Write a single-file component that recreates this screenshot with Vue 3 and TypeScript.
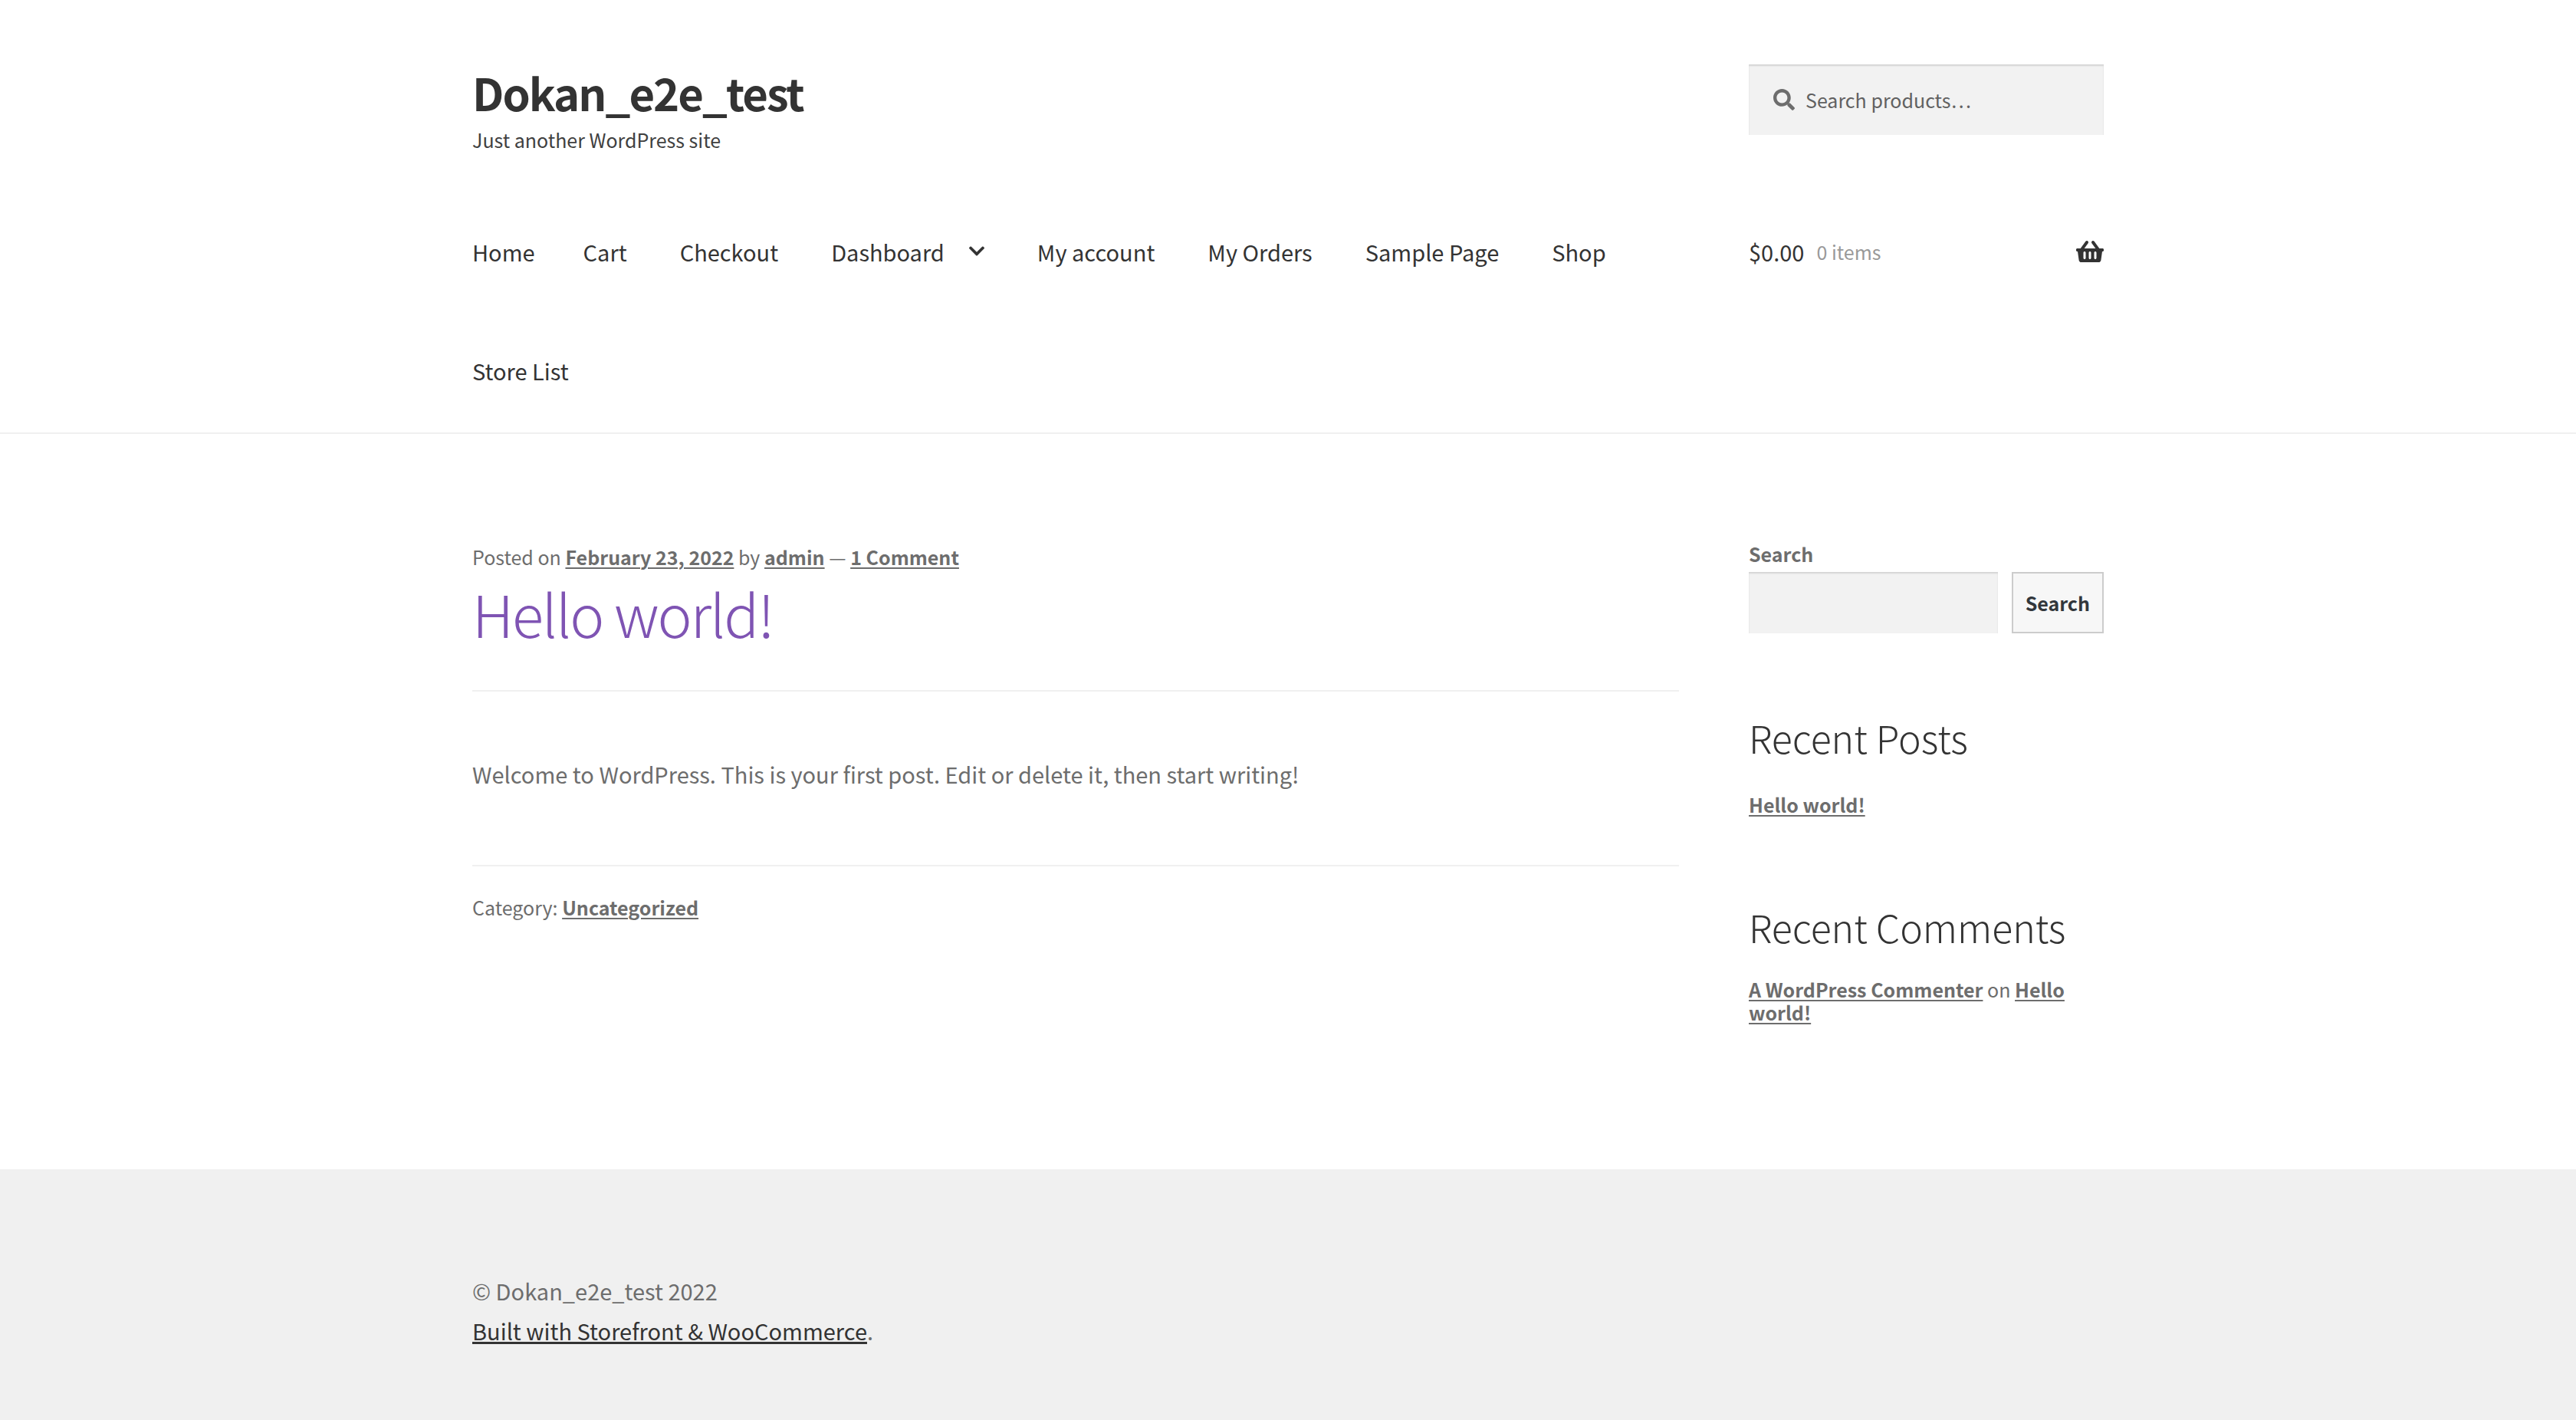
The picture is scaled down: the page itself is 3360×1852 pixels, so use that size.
<script setup lang="ts">
import { ref } from 'vue'

interface NavItem {
  label: string
  hasChildren?: boolean
}

const navItems: NavItem[] = [
  { label: 'Home' },
  { label: 'Cart' },
  { label: 'Checkout' },
  { label: 'Dashboard', hasChildren: true },
  { label: 'My account' },
  { label: 'My Orders' },
  { label: 'Sample Page' },
  { label: 'Shop' },
  { label: 'Store List' },
]

const productQuery = ref('')
const siteQuery = ref('')
</script>

<template>
  <div class="page">
    <header class="site-header">
      <div class="container">
        <div class="columns">
          <div class="branding">
            <a class="site-title" href="#">Dokan_e2e_test</a>
            <p class="tagline">Just another WordPress site</p>
          </div>
          <form class="product-search" role="search" @submit.prevent>
            <svg class="search-icon" viewBox="0 0 512 512" aria-hidden="true">
              <path d="M505 442.7L405.3 343c-4.5-4.5-10.6-7-17-7H372c27.6-35.3 44-79.7 44-128C416 93.1 322.9 0 208 0S0 93.1 0 208s93.1 208 208 208c48.3 0 92.7-16.4 128-44v16.3c0 6.4 2.5 12.5 7 17l99.7 99.7c9.4 9.4 24.6 9.4 33.9 0l28.3-28.3c9.4-9.4 9.4-24.6.1-34zM208 336c-70.7 0-128-57.2-128-128 0-70.7 57.2-128 128-128 70.7 0 128 57.2 128 128 0 70.7-57.2 128-128 128z" />
            </svg>
            <input v-model="productQuery" type="search" aria-label="Search products" placeholder="Search products…" />
          </form>
        </div>
        <div class="columns">
          <nav class="main-nav">
            <ul>
              <li v-for="item in navItems" :key="item.label">
                <a href="#">{{ item.label }}
                  <svg v-if="item.hasChildren" class="chevron" viewBox="5 123 438 266" aria-hidden="true">
                    <path d="M207.029 381.476L12.686 187.132c-9.373-9.373-9.373-24.569 0-33.941l22.667-22.667c9.357-9.357 24.522-9.375 33.901-.04L224 284.505l154.745-154.021c9.379-9.335 24.544-9.317 33.901.04l22.667 22.667c9.373 9.373 9.373 24.569 0 33.941L240.971 381.476c-9.373 9.372-24.569 9.372-33.942 0z" />
                  </svg>
                </a>
              </li>
            </ul>
          </nav>
          <a class="cart" href="#">
            <span>$0.00</span>
            <span class="count">0 items</span>
            <svg class="basket" viewBox="0 0 576 512" aria-hidden="true">
              <path d="M576 216v16c0 13.255-10.745 24-24 24h-8l-26.113 182.788C514.509 462.435 494.257 480 470.37 480H105.63c-23.887 0-44.139-17.565-47.518-41.212L32 256h-8c-13.255 0-24-10.745-24-24v-16c0-13.255 10.745-24 24-24h67.341l106.78-146.821c10.395-14.292 30.407-17.453 44.701-7.058 14.293 10.395 17.453 30.408 7.058 44.701L170.477 192h235.046L326.12 82.821c-10.395-14.292-7.234-34.306 7.059-44.701 14.291-10.395 34.306-7.235 44.701 7.058L484.659 192H552c13.255 0 24 10.745 24 24zM312 392V280c0-13.255-10.745-24-24-24s-24 10.745-24 24v112c0 13.255 10.745 24 24 24s24-10.745 24-24zm112 0V280c0-13.255-10.745-24-24-24s-24 10.745-24 24v112c0 13.255 10.745 24 24 24s24-10.745 24-24zm-224 0V280c0-13.255-10.745-24-24-24s-24 10.745-24 24v112c0 13.255 10.745 24 24 24s24-10.745 24-24z" />
            </svg>
          </a>
        </div>
      </div>
    </header>

    <div class="container columns content">
      <main>
        <article>
          <header class="entry-header">
            <p class="meta">
              Posted on <a href="#">February 23, 2022</a> by <a href="#">admin</a> — <a href="#">1 Comment</a>
            </p>
            <h1><a href="#">Hello world!</a></h1>
          </header>
          <p class="entry-text">Welcome to WordPress. This is your first post. Edit or delete it, then start writing!</p>
          <footer class="entry-footer meta">Category: <a href="#">Uncategorized</a></footer>
        </article>
      </main>

      <aside>
        <form class="widget-search" role="search" @submit.prevent>
          <label for="site-search">Search</label>
          <div class="search-row">
            <input id="site-search" v-model="siteQuery" type="search" />
            <button type="submit">Search</button>
          </div>
        </form>
        <section class="recent-posts">
          <h2>Recent Posts</h2>
          <ul>
            <li><a href="#">Hello world!</a></li>
          </ul>
        </section>
        <section class="recent-comments">
          <h2>Recent Comments</h2>
          <ol>
            <li><a href="#">A WordPress Commenter</a> on <a href="#">Hello world!</a></li>
          </ol>
        </section>
      </aside>
    </div>

    <footer class="site-footer">
      <div class="container">
        <p>© Dokan_e2e_test 2022</p>
        <p><a href="#">Built with Storefront &amp; WooCommerce</a>.</p>
      </div>
    </footer>
  </div>
</template>

<style>
body {
  margin: 0;
  background: #fff;
}
</style>

<style scoped>
.page {
  display: flex;
  flex-direction: column;
  min-height: 100vh;
  font-family: "Noto Sans CJK SC", "Noto Sans", sans-serif;
  font-size: 29px;
  line-height: 52px;
  color: #6d6d6d;
}

* {
  box-sizing: border-box;
}

p,
h1,
h2,
ul,
ol {
  margin: 0;
  padding: 0;
}

ul,
ol {
  list-style: none;
}

svg {
  fill: currentColor;
}

.container {
  width: 100%;
  max-width: 2128px;
  margin: 0 auto;
}

.columns {
  display: grid;
  grid-template-columns: minmax(0, 1fr) 463px;
  column-gap: 91px;
  align-items: start;
}

/* Header */
.site-header {
  padding: 84px 0 4px;
  border-bottom: 2px solid #f0f0f0;
}

.branding {
  padding: 6px 0 52px;
  color: #404040;
}

.site-title {
  display: block;
  font-size: 58px;
  line-height: 60px;
  font-weight: 700;
  letter-spacing: -2px;
  color: #333;
  text-decoration: none;
}

.tagline {
  margin-top: 16px;
  font-size: 25px;
  line-height: 32px;
}

input {
  min-width: 0;
  border: 0;
  border-radius: 0;
  outline: 0;
  background: #f2f2f2;
  box-shadow: inset 0 2px 2px rgba(0, 0, 0, 0.125);
  font: inherit;
  font-size: 25px;
  color: #43454b;
  appearance: none;
}

.product-search {
  display: grid;
  align-items: center;
}

.product-search > * {
  grid-area: 1 / 1;
}

.product-search input {
  width: 100%;
  height: 92px;
  padding: 0 32px 0 74px;
}

.product-search input::placeholder {
  color: #616161;
  opacity: 1;
}

.search-icon {
  z-index: 1;
  width: 28px;
  height: 28px;
  margin-left: 32px;
}

.main-nav ul {
  display: flex;
  flex-wrap: wrap;
  column-gap: 69px;
}

.main-nav li:first-child {
  margin-right: -6px;
}

.main-nav a {
  display: flex;
  align-items: center;
  gap: 32px;
  height: 155px;
  color: #333;
  text-decoration: none;
}

.chevron {
  width: 20px;
  height: 13px;
}

.cart {
  display: flex;
  align-items: center;
  gap: 16px;
  height: 155px;
  color: #333;
  text-decoration: none;
}

.count {
  font-size: 25px;
  color: #999;
}

.basket {
  width: 36px;
  height: 32px;
  margin-left: auto;
}

/* Content */
.content {
  padding: 136px 0 190px;
}

main {
  padding-top: 4px;
}

.meta {
  font-size: 25px;
  line-height: 40px;
}

.meta a,
aside a {
  font-weight: 700;
  color: #6d6d6d;
  text-decoration: underline;
  text-decoration-thickness: 2px;
  text-underline-offset: 3px;
}

.entry-header {
  padding-bottom: 53px;
  border-bottom: 2px solid #f0f0f0;
}

h1 {
  margin-top: 5px;
  font-size: 76px;
  line-height: 96px;
  font-weight: 300;
  letter-spacing: -2px;
}

h1 a {
  color: #7f54b3;
  text-decoration: none;
}

.entry-text {
  padding: 81px 0 93px;
}

.entry-footer {
  padding-top: 33px;
  border-top: 2px solid #f0f0f0;
}

/* Sidebar */
aside {
  font-size: 25px;
  line-height: 30px;
}

.widget-search label {
  display: block;
  margin-bottom: 4px;
  line-height: 40px;
  font-weight: 700;
}

.search-row {
  display: flex;
  gap: 18px;
}

.search-row input {
  flex: 1;
  height: 80px;
  padding: 0 16px;
}

.search-row button {
  height: 80px;
  padding: 0 16px;
  border: 2px solid #ccc;
  border-radius: 0;
  background: #f7f7f7;
  font: inherit;
  font-weight: 700;
  color: #32373c;
}

h2 {
  font-size: 50px;
  line-height: 60px;
  font-weight: 300;
  color: #333;
}

.recent-posts {
  margin-top: 105px;
}

.recent-posts ul {
  margin-top: 43px;
}

.recent-comments {
  margin-top: 114px;
}

.recent-comments ol {
  margin-top: 37px;
}

/* Footer */
.site-footer {
  flex: 1;
  padding: 132px 0 91px;
  background: #f0f0f0;
}

.site-footer a {
  color: #333;
  text-decoration: underline;
  text-decoration-thickness: 3px;
  text-underline-offset: 2px;
}
</style>
